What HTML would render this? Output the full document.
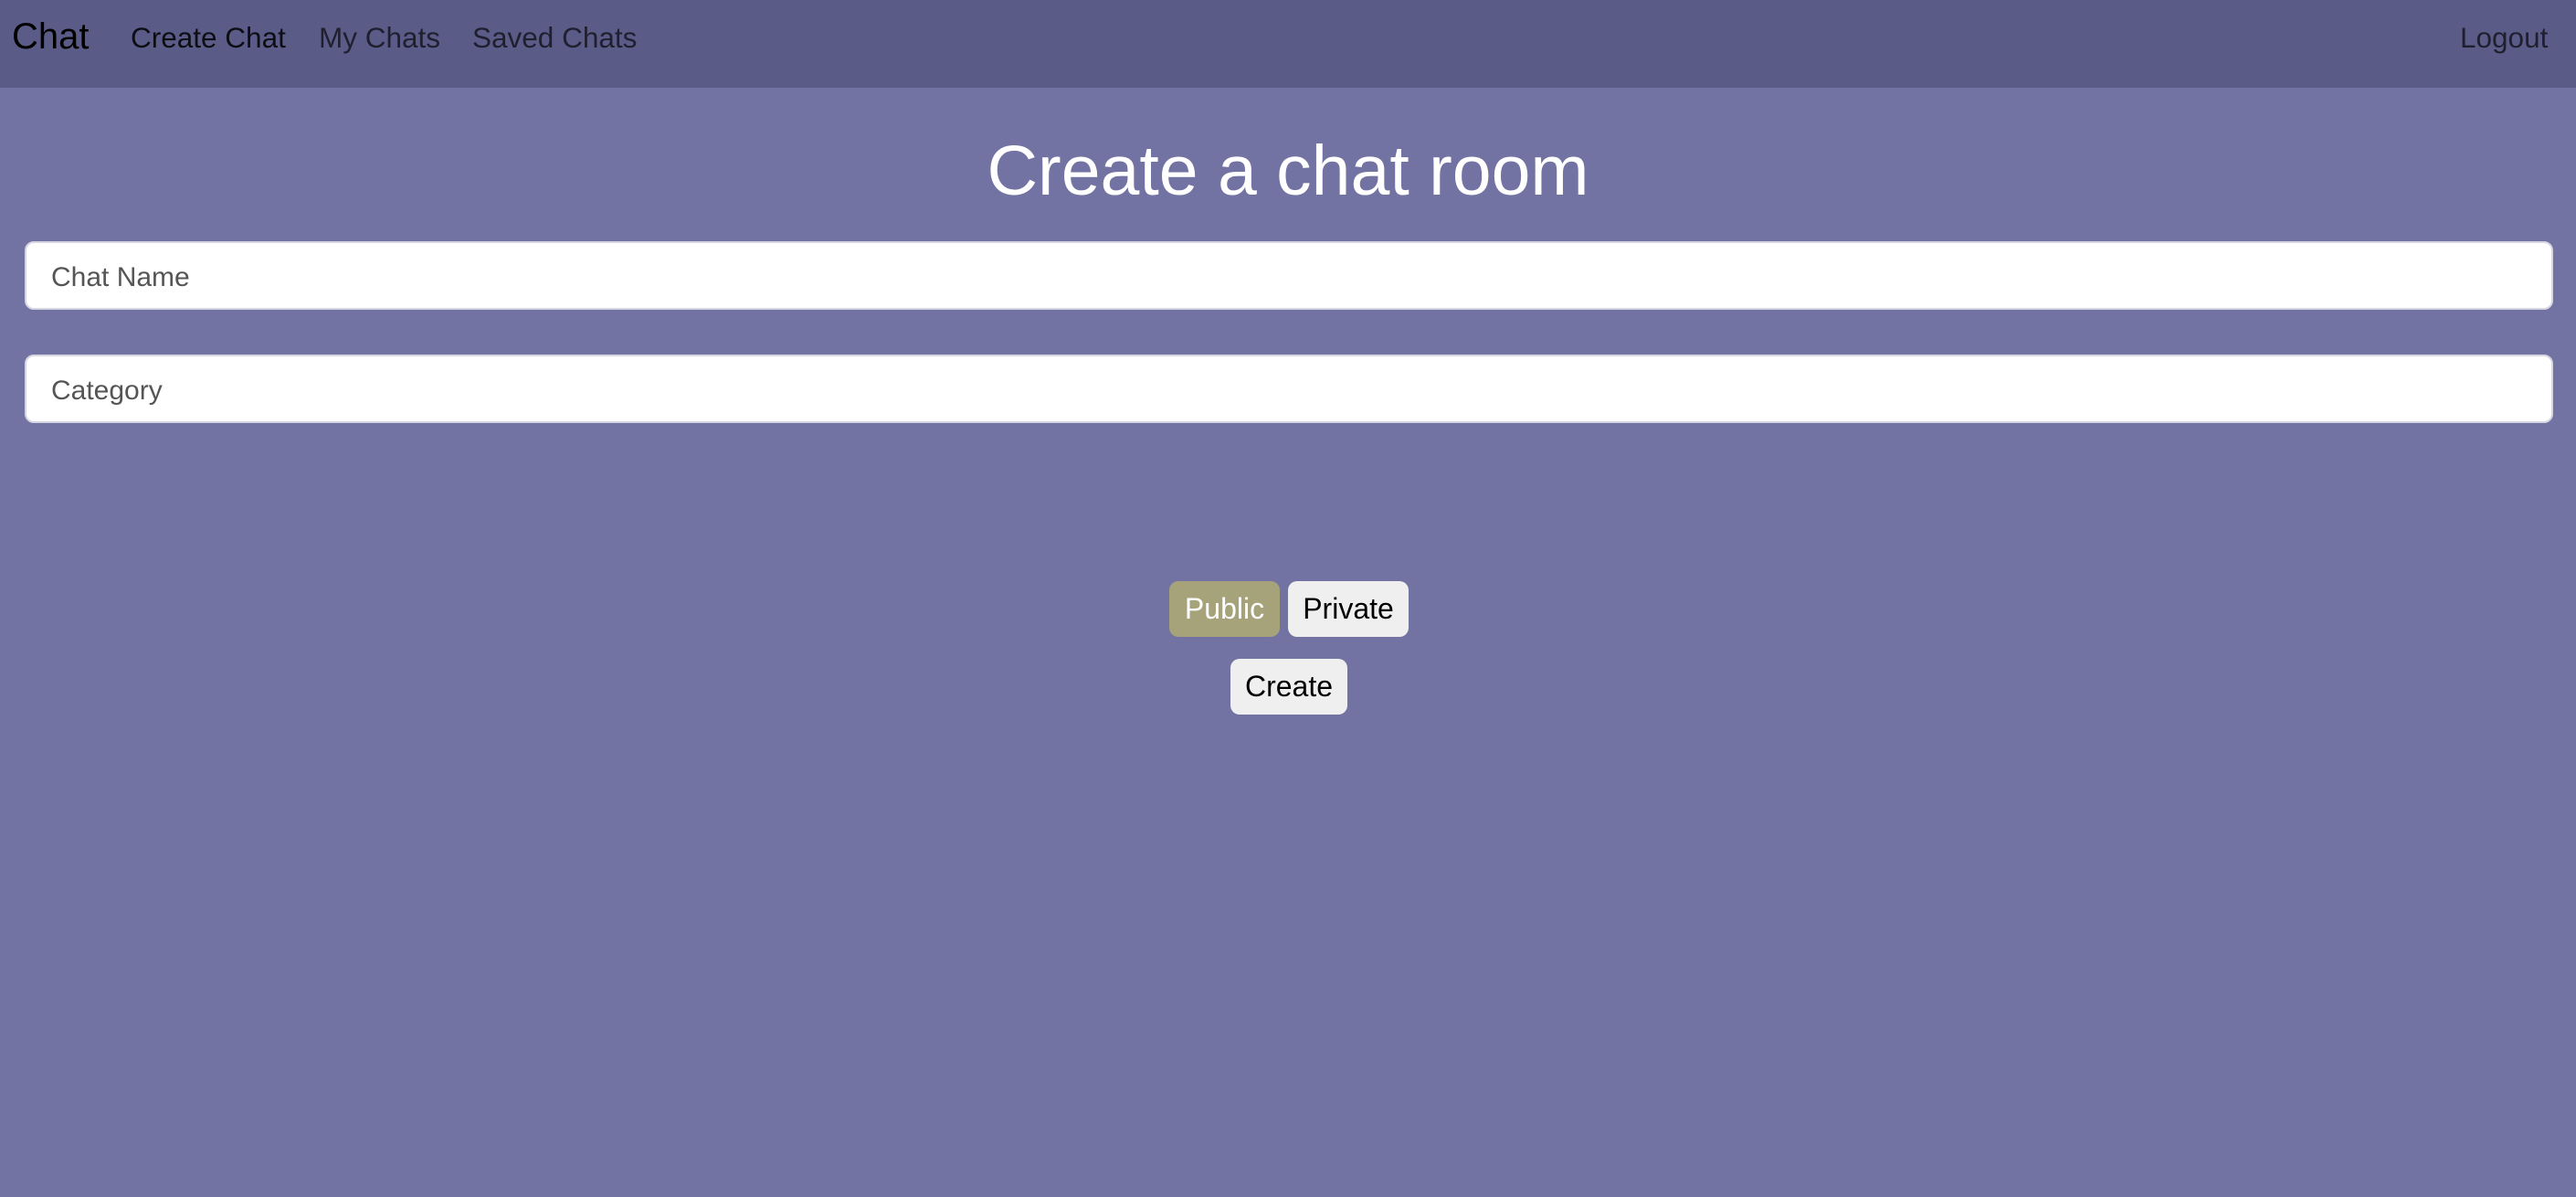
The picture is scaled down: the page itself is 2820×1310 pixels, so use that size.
<!DOCTYPE html>
<html><head><meta charset="utf-8"><style>
*{box-sizing:border-box;margin:0;padding:0}
body{width:2820px;height:1310px;background:#7273a2;font-family:"Liberation Sans",sans-serif;position:relative;overflow:hidden}
.nav{position:absolute;left:0;top:0;width:2820px;height:96px;background:#5b5b88}
.nav span{position:absolute;white-space:nowrap}
.brand{left:13px;top:18px;font-size:40px;color:#000}
.lnk{top:23px;font-size:31.5px;color:rgba(0,0,0,.65)}
h1{position:absolute;left:0;width:2820px;top:143px;text-align:center;color:#fff;font-weight:normal;font-size:77px}
.inp{position:absolute;left:27px;width:2768px;height:75px;background:#fff;border:2px solid #d6d6e2;border-radius:10px;font-size:30px;color:#555;padding:21px 0 0 27px}
.btn{position:absolute;height:61px;border-radius:10px;background:#efefef;font-size:32px;color:#000;text-align:center;line-height:61px}
</style></head><body>
<div class="nav">
<span class="brand">Chat</span>
<span class="lnk" style="left:143px;color:rgba(0,0,0,.85)">Create Chat</span>
<span class="lnk" style="left:349px">My Chats</span>
<span class="lnk" style="left:517px">Saved Chats</span>
<span class="lnk" style="left:2693px">Logout</span>
</div>
<h1>Create a chat room</h1>
<div class="inp" style="top:264px">Chat Name</div>
<div class="inp" style="top:388px">Category</div>
<div class="btn" style="left:1280px;top:636px;width:121px;background:#a6a37a;color:#fff">Public</div>
<div class="btn" style="left:1410px;top:636px;width:132px">Private</div>
<div class="btn" style="left:1347px;top:721px;width:128px">Create</div>
</body></html>
